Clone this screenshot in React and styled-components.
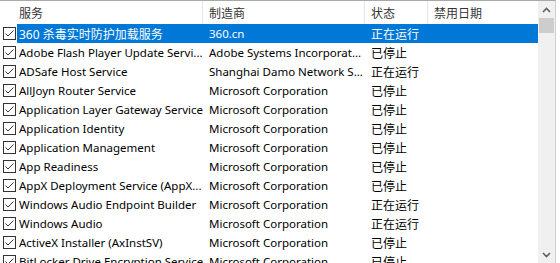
import React from "react";
import styled, { createGlobalStyle } from "styled-components";

const Global = createGlobalStyle`
  html, body { margin: 0; padding: 0; background: #fff; }
  body { font-family: "Noto Sans", "Noto Sans CJK SC", sans-serif; font-size: 11.5px; color: #000; overflow: hidden; }
`;

const Frame = styled.div`
  display: flex;
  width: 556px;
  height: 263px;
  border-top: 1px solid #a9a9a9;
  border-right: 1px solid #cfcfcf;
  box-sizing: border-box;
  overflow: hidden;
`;

const List = styled.div`
  flex: 1;
  display: flex;
  flex-direction: column;
  min-width: 0;
`;

const cols = "17px 186px 162px 63px 1fr";

const Header = styled.div`
  display: grid;
  grid-template-columns: ${cols};
  height: 23px;
  flex-shrink: 0;
`;

const HeadCell = styled.div`
  display: flex;
  align-items: center;
  padding-left: ${(p) => p.$pad ?? 6}px;
  color: #333;
  font-size: 12px;
  border-right: ${(p) => (p.$sep ? "1px solid #e5e5e5" : "none")};
  white-space: nowrap;
  overflow: hidden;
`;

const Row = styled.div`
  display: grid;
  grid-template-columns: ${cols};
  height: 19px;
  flex-shrink: 0;
`;

const CheckCell = styled.div`
  display: flex;
  align-items: center;
  padding-left: 3px;
`;

const Cell = styled.div`
  display: flex;
  align-items: center;
  padding-left: ${(p) => p.$pad ?? 6}px;
  font-size: ${(p) => (p.$cjk ? 12 : 11.5)}px;
  white-space: nowrap;
  overflow: hidden;
  background: ${(p) => (p.$sel ? "#0078d7" : "transparent")};
  color: ${(p) => (p.$sel ? "#fff" : "#000")};
`;

const Scroll = styled.div`
  width: 17px;
  flex-shrink: 0;
  background: #f0f0f0;
  display: flex;
  flex-direction: column;
  align-items: center;
`;

const Arrow = styled.div`
  height: 17px;
  width: 17px;
  display: flex;
  align-items: center;
  justify-content: center;
  flex-shrink: 0;
`;

const Track = styled.div`
  flex: 1;
  width: 100%;
  display: flex;
  flex-direction: column;
  align-items: center;
`;

const Thumb = styled.div`
  width: 15px;
  height: 15px;
  background: #cdcdcd;
`;

const Check = () => (
  <svg width="13" height="13" viewBox="0 0 13 13">
    <rect x="0.5" y="0.5" width="12" height="12" fill="#fff" stroke="#333" />
    <path d="M2.5 6.5 L5 9 L10.5 3.5" fill="none" stroke="#333" strokeWidth="1" />
  </svg>
);

const Chevron = ({ up }) => (
  <svg width="9" height="6" viewBox="0 0 9 6">
    <path
      d={up ? "M1 5 L4.5 1.5 L8 5" : "M1 1 L4.5 4.5 L8 1"}
      fill="none"
      stroke="#606060"
      strokeWidth="1.6"
    />
  </svg>
);

const rows = [
  ["360 杀毒实时防护加载服务", "360.cn", "正在运行"],
  ["Adobe Flash Player Update Servi...", "Adobe Systems Incorporat...", "已停止"],
  ["ADSafe Host Service", "Shanghai Damo Network S...", "正在运行"],
  ["AllJoyn Router Service", "Microsoft Corporation", "已停止"],
  ["Application Layer Gateway Service", "Microsoft Corporation", "已停止"],
  ["Application Identity", "Microsoft Corporation", "已停止"],
  ["Application Management", "Microsoft Corporation", "已停止"],
  ["App Readiness", "Microsoft Corporation", "已停止"],
  ["AppX Deployment Service (AppX...", "Microsoft Corporation", "已停止"],
  ["Windows Audio Endpoint Builder", "Microsoft Corporation", "正在运行"],
  ["Windows Audio", "Microsoft Corporation", "正在运行"],
  ["ActiveX Installer (AxInstSV)", "Microsoft Corporation", "已停止"],
  ["BitLocker Drive Encryption Service", "Microsoft Corporation", "已停止"],
];

export default function App() {
  return (
    <>
      <Global />
      <Frame>
        <List>
          <Header>
            <HeadCell $pad={0} />
            <HeadCell $pad={2} $sep>服务</HeadCell>
            <HeadCell $sep>制造商</HeadCell>
            <HeadCell $sep>状态</HeadCell>
            <HeadCell>禁用日期</HeadCell>
          </Header>
          {rows.map(([name, maker, status], i) => {
            const sel = i === 0;
            return (
              <Row key={i}>
                <CheckCell>
                  <Check />
                </CheckCell>
                <Cell $pad={2} $sel={sel} $cjk={i === 0}>{name}</Cell>
                <Cell $sel={sel}>{maker}</Cell>
                <Cell $sel={sel} $cjk>{status}</Cell>
                <Cell $sel={sel} />
              </Row>
            );
          })}
        </List>
        <Scroll>
          <Arrow>
            <Chevron up />
          </Arrow>
          <Track>
            <Thumb />
          </Track>
          <Arrow>
            <Chevron />
          </Arrow>
        </Scroll>
      </Frame>
    </>
  );
}
